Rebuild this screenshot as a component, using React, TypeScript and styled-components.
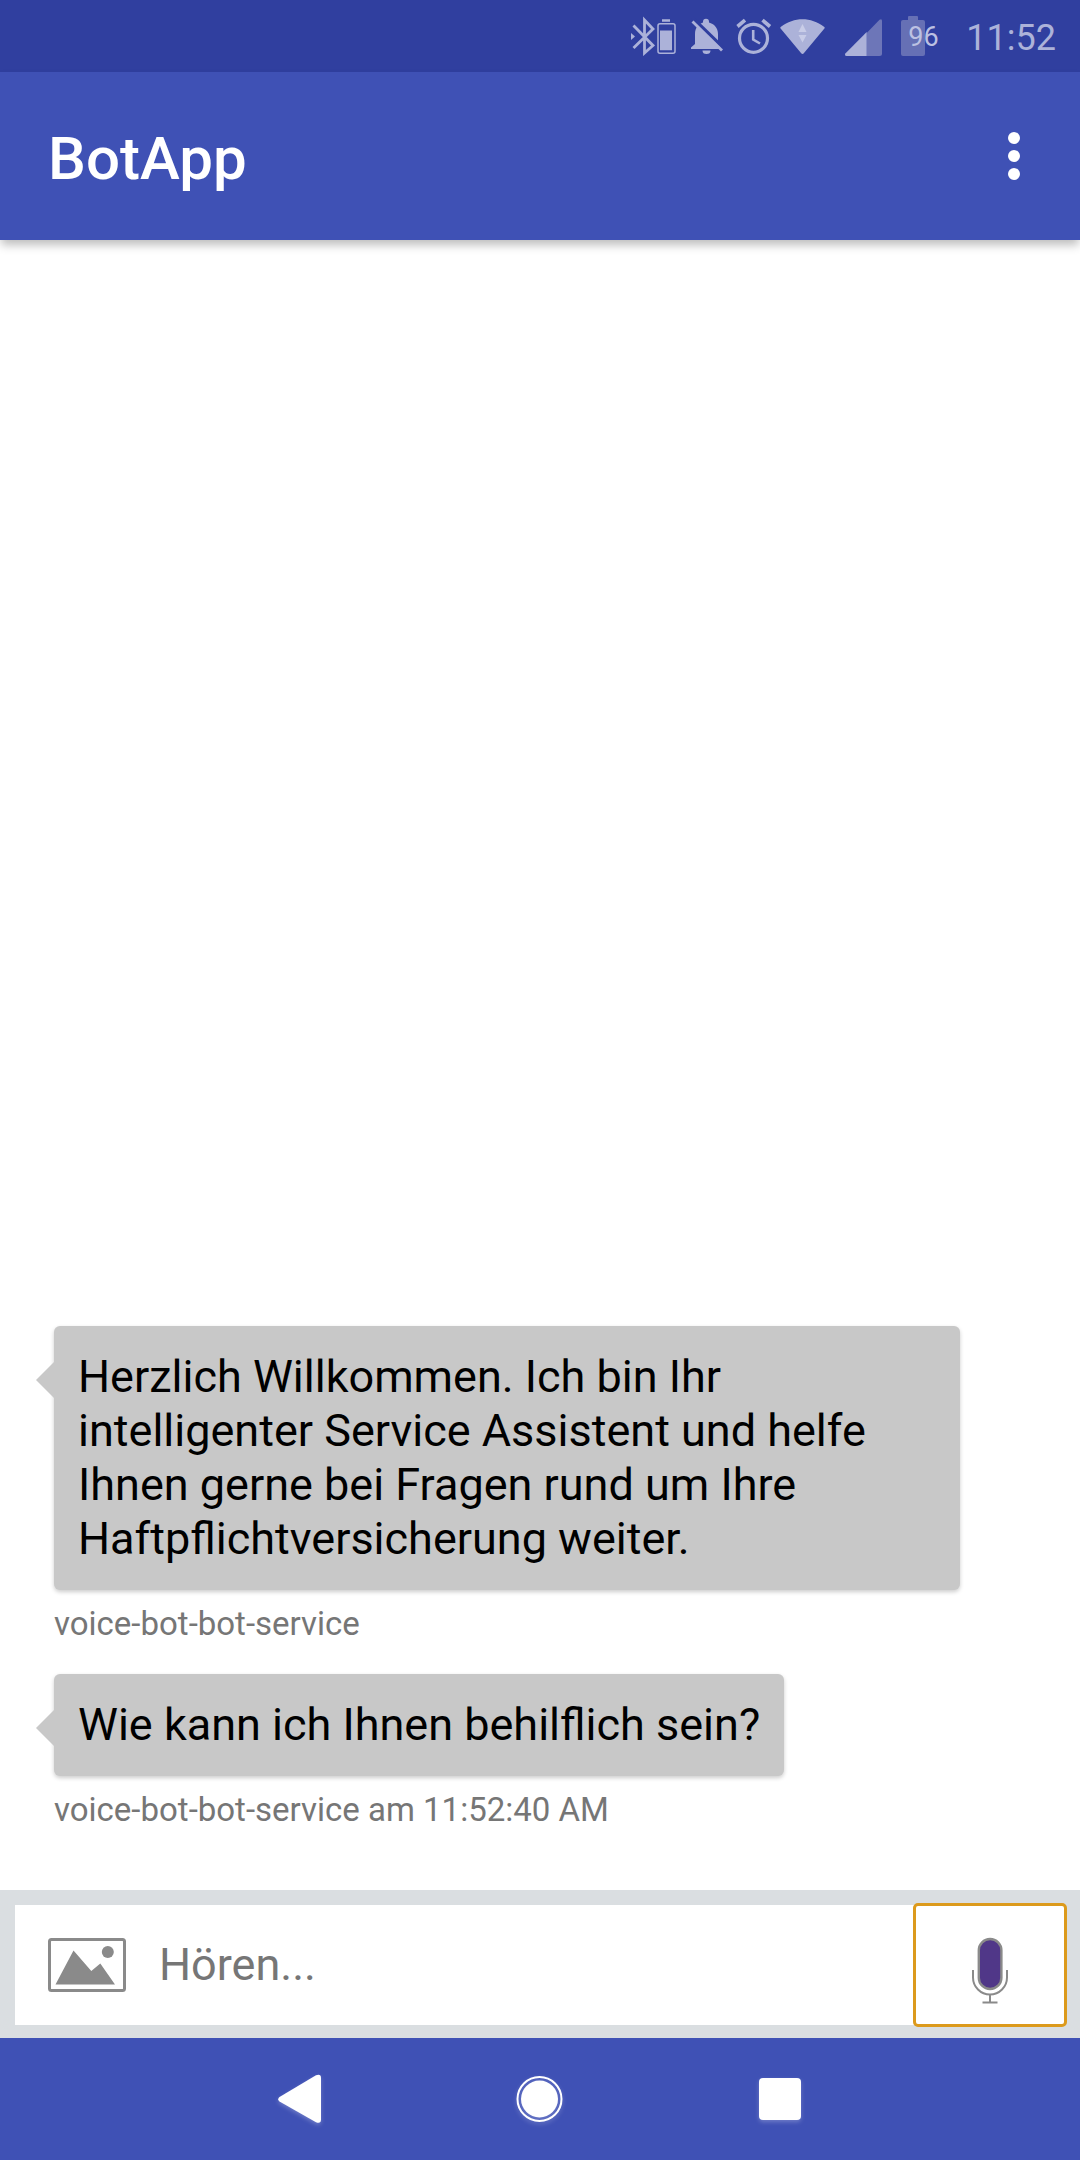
import React from "react";
import styled, { createGlobalStyle } from "styled-components";

const color = {
  primary: "#3f51b5",
  primaryDark: "#303f9f",
  statusIcon: "#acb2d9",
  statusDim: "#6d76b8",
  bubble: "#c8c8c8",
  caption: "#767676",
  icon: "#8a8a8a",
  composer: "#dadee1",
};

const GlobalStyle = createGlobalStyle`
  *, *::before, *::after { box-sizing: border-box; }
  body { margin: 0; font-family: Roboto, "Liberation Sans", sans-serif; }
  button { border: 0; padding: 0; background: none; cursor: pointer; }
  svg { display: block; flex: none; }
`;

const Screen = styled.div`
  display: flex;
  flex-direction: column;
  min-height: 100vh;
  background: #fff;
`;

const StatusBar = styled.div`
  display: flex;
  align-items: center;
  justify-content: flex-end;
  gap: 8px;
  height: 72px;
  padding-right: 24px;
  background: ${color.primaryDark};
  color: ${color.statusIcon};
`;

const Clock = styled.time`
  padding-top: 4px;
  font-size: 36px;
  line-height: 42px;
`;

const BatteryLevel = styled.div`
  position: relative;
  width: 62px;
  height: 40px;
`;

const BatteryText = styled.span`
  position: absolute;
  left: 12px;
  top: 5px;
  font-size: 27px;
  line-height: 32px;
  color: #bcc1e2;
`;

const AppBar = styled.header`
  position: relative;
  display: flex;
  align-items: center;
  justify-content: space-between;
  height: 168px;
  padding: 0 36px 0 48px;
  background: ${color.primary};
  box-shadow: 0 6px 9px -1px rgba(0, 0, 0, 0.26);
`;

const Title = styled.h1`
  margin: 0;
  padding-top: 6px;
  font-size: 60px;
  font-weight: 500;
  line-height: 72px;
  color: #fff;
`;

const MenuButton = styled.button`
  display: flex;
  align-items: center;
  justify-content: center;
  width: 60px;
  height: 96px;
`;

const Chat = styled.main`
  flex: 1;
  display: flex;
  flex-direction: column;
  justify-content: flex-end;
  gap: 30px;
  padding: 60px 120px 60px 54px;
`;

const Message = styled.article`
  display: flex;
  flex-direction: column;
  align-items: flex-start;
  gap: 14px;
`;

const Bubble = styled.p`
  position: relative;
  margin: 0;
  padding: 24px;
  border-radius: 6px;
  background: ${color.bubble};
  box-shadow: 0 2px 4px rgba(0, 0, 0, 0.2);
  font-size: 45px;
  line-height: 54px;
  color: #000;

  &::before {
    content: "";
    position: absolute;
    left: -18px;
    top: 36px;
    border: 18px solid transparent;
    border-left-width: 0;
    border-right-color: ${color.bubble};
  }
`;

const Caption = styled.div`
  font-size: 33px;
  line-height: 40px;
  color: ${color.caption};
`;

const Composer = styled.form`
  display: flex;
  padding: 15px 15px 13px;
  background: ${color.composer};
`;

const Field = styled.div`
  flex: 1;
  display: flex;
  align-items: center;
  gap: 33px;
  height: 120px;
  padding-left: 33px;
  background: #fff;
`;

const TextInput = styled.input`
  flex: 1;
  min-width: 0;
  height: 54px;
  border: 0;
  padding: 0 0 2px;
  outline: 0;
  background: transparent;
  font: 45px Roboto, "Liberation Sans", sans-serif;
  color: #000;

  &::placeholder {
    color: ${color.caption};
    opacity: 1;
  }
`;

const MicButton = styled.button`
  display: flex;
  align-items: center;
  justify-content: center;
  width: 150px;
  height: 120px;
  border-radius: 3px;
  background: #fff;
  outline: 3px solid #dc9a1c;
  outline-offset: -1px;
`;

const NavBar = styled.nav`
  display: grid;
  grid-template-columns: repeat(3, 240px);
  justify-content: center;
  height: 122px;
  background: ${color.primary};
`;

const NavButton = styled.button`
  display: flex;
  align-items: center;
  justify-content: center;

  svg {
    filter: drop-shadow(0 2px 2px rgba(255, 255, 255, 0.25));
  }
`;

const BluetoothIcon = () => (
  <svg width="52" height="40" viewBox="0 0 52 40" fill="none" stroke="currentColor">
    <path d="M2.5 9.5 22 29.5 13.5 37V4L22 13 2.5 32" strokeWidth="2.8" />
    <path d="M0 17v7l4-3.5z" fill="currentColor" stroke="none" />
    <rect x="27" y="7.7" width="17" height="29.6" rx="2" strokeWidth="1.5" />
    <path d="M31 3.2h8v2.6h-8zM29 14.4h12v19.8H29z" fill="currentColor" stroke="none" />
  </svg>
);

const BellOffIcon = () => (
  <svg width="36" height="40" viewBox="0 0 36 40" fill="none">
    <path
      d="M0 33v-1.5L4 28V18C4 11.5 7.5 8 12 6.500V5.800a3 3 0 0 1 6 0V6.500C23 8 27 11.500 27 18V28L30 32V33zM11.500 34.500h8a4 3.500 0 0 1-8 0z"
      fill="currentColor"
    />
    <path d="M1 1.500 35 34.500" stroke={color.primaryDark} strokeWidth="3.500" />
    <path d="M1.500 5.500 31 34.500" stroke="currentColor" strokeWidth="2.800" />
  </svg>
);

const AlarmIcon = () => (
  <svg width="37" height="40" viewBox="0 0 37 40" fill="none" stroke="currentColor">
    <circle cx="18.5" cy="22.3" r="14" strokeWidth="3.2" />
    <path d="M18.200 14v9.500l6.800 4" strokeWidth="2.600" />
    <path d="M2.500 10.500 10 4.200M27.500 4.200 35 10.500" strokeWidth="3.600" />
  </svg>
);

const WifiIcon = () => (
  <svg width="50" height="40" viewBox="0 0 50 40">
    <path d="M.6 12.500Q-.2 11.500 1 10.700C14 .7 31 .7 44 10.700Q45.200 11.500 44.400 12.500L24 37q-1.500 1.800-3 0z" fill="currentColor" />
    <path d="M22.500 8l4 8h-8zM18.500 19h8l-4 7.500z" fill="#c9cde8" />
  </svg>
);

const SignalIcon = () => (
  <svg width="50" height="40" viewBox="0 0 50 40">
    <path d="M28.700 40V17L41.500 3.800Q44 2 44 5V37.500Q44 40 41.500 40z" fill={color.statusDim} />
    <path d="M28.700 16v24H8.500Q6 39.500 7.600 37.200z" fill="currentColor" />
  </svg>
);

const BatteryIcon = () => (
  <svg width="36" height="40" viewBox="0 0 36 40">
    <path d="M12 4V1q0-1 1-1h8q1 0 1 1v3h5q2 0 2 2v32q0 2-2 2H7q-2 0-2-2V6q0-2 2-2z" fill="#6670b5" />
  </svg>
);

const MoreIcon = () => (
  <svg width="12" height="48" viewBox="0 0 12 48" fill="#fff">
    <circle cx="6" cy="6" r="6" />
    <circle cx="6" cy="24" r="6" />
    <circle cx="6" cy="42" r="6" />
  </svg>
);

const PictureIcon = () => (
  <svg width="78" height="54" viewBox="0 0 78 54" fill={color.icon}>
    <rect x="1.500" y="1.500" width="75" height="51" rx="2" fill="none" stroke={color.icon} strokeWidth="3" />
    <path d="M7.500 46.500 25.500 12.500 43.300 33 52.300 25.600 67 46.500z" />
    <circle cx="59.800" cy="14" r="6" />
  </svg>
);

const MicIcon = () => (
  <svg width="38" height="78" viewBox="0 0 38 78" fill="none" stroke={color.icon}>
    <rect x="7.800" y="13" width="22.600" height="50" rx="11.300" fill="#503788" strokeWidth="2.400" />
    <path d="M2 44v7.500a17 17 0 0 0 34 0V44M19 69v7M11.500 76.500h15" strokeWidth="2" />
  </svg>
);

const BackIcon = () => (
  <svg width="44" height="50" viewBox="0 0 44 50" fill="#fff">
    <path d="M1.500 23 38 1.200Q43 -.6 43 4V45.500Q43 50 38 48.200L1.500 27.500Q-1 25.200 1.500 23z" />
  </svg>
);

const HomeIcon = () => (
  <svg width="48" height="48" viewBox="0 0 48 48" fill="none">
    <circle cx="23.500" cy="24" r="22" stroke="#fff" strokeWidth="2" />
    <circle cx="23.500" cy="24" r="18.500" fill="#fff" />
  </svg>
);

const RecentsIcon = () => (
  <svg width="42" height="42" viewBox="0 0 42 42">
    <rect width="42" height="42" rx="4" fill="#fff" />
  </svg>
);

const messages = [
  {
    text: "Herzlich Willkommen. Ich bin Ihr intelligenter Service Assistent und helfe Ihnen gerne bei Fragen rund um Ihre Haftpflichtversicherung weiter.",
    caption: "voice-bot-bot-service",
  },
  {
    text: "Wie kann ich Ihnen behilflich sein?",
    caption: "voice-bot-bot-service am 11:52:40 AM",
  },
];

export default function App() {
  return (
    <Screen>
      <GlobalStyle />
      <StatusBar>
        <BluetoothIcon />
        <BellOffIcon />
        <AlarmIcon />
        <WifiIcon />
        <SignalIcon />
        <BatteryLevel>
          <BatteryIcon />
          <BatteryText>96</BatteryText>
        </BatteryLevel>
        <Clock>11:52</Clock>
      </StatusBar>
      <AppBar>
        <Title>BotApp</Title>
        <MenuButton type="button" aria-label="Menü">
          <MoreIcon />
        </MenuButton>
      </AppBar>
      <Chat>
        {messages.map((message) => (
          <Message key={message.caption}>
            <Bubble>{message.text}</Bubble>
            <Caption>{message.caption}</Caption>
          </Message>
        ))}
      </Chat>
      <Composer onSubmit={(event) => event.preventDefault()}>
        <Field>
          <button type="button" aria-label="Bild senden">
            <PictureIcon />
          </button>
          <TextInput type="text" aria-label="Nachricht" placeholder="Hören..." />
        </Field>
        <MicButton type="button" aria-label="Mikrofon">
          <MicIcon />
        </MicButton>
      </Composer>
      <NavBar>
        <NavButton type="button" aria-label="Zurück">
          <BackIcon />
        </NavButton>
        <NavButton type="button" aria-label="Startseite">
          <HomeIcon />
        </NavButton>
        <NavButton type="button" aria-label="Übersicht">
          <RecentsIcon />
        </NavButton>
      </NavBar>
    </Screen>
  );
}
